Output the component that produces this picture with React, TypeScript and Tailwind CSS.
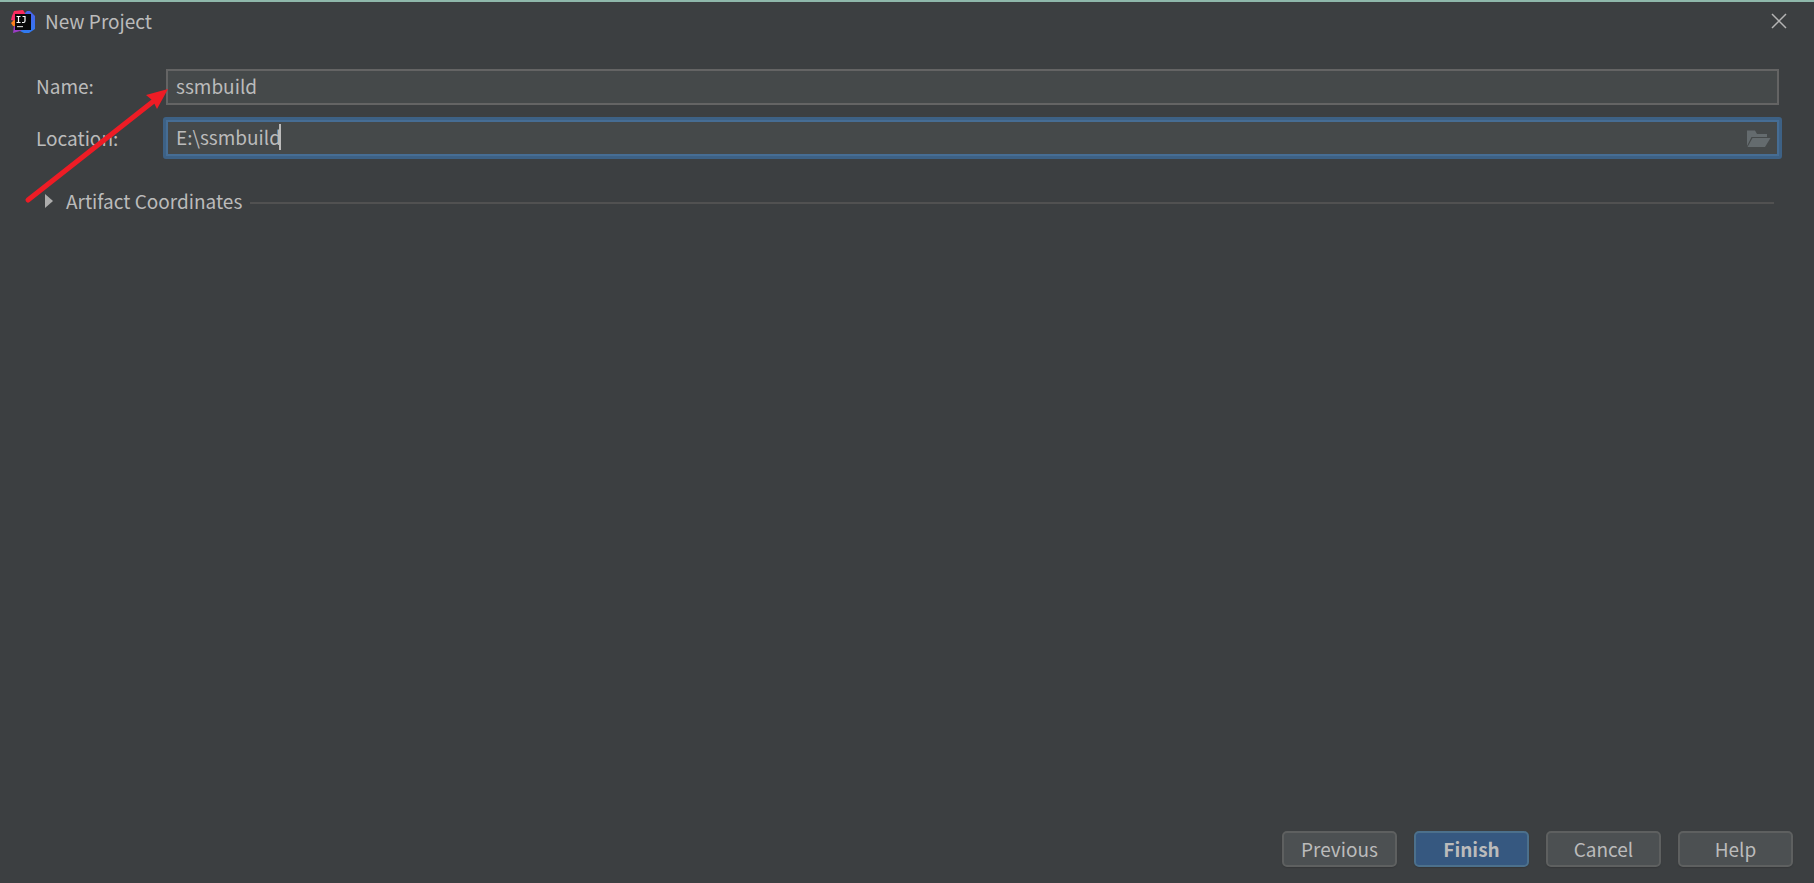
import { useState } from "react";

const FIELD = "block h-9 w-full border-2 bg-[#45494a] px-2 text-[#bbbbbb] outline-none";
const BUTTON = "h-9 w-[115px] rounded-[5px] border-2 shadow-[0_1px_1px_#353739]";

function IdeaLogo() {
  return (
    <svg width="24" height="24" viewBox="0 0 24 24" className="shrink-0" aria-hidden="true">
      <defs>
        <linearGradient id="logo-blue" x1="0.6" y1="0" x2="0.5" y2="1">
          <stop offset="0" stopColor="#4a62ea" />
          <stop offset="1" stopColor="#2f7bf0" />
        </linearGradient>
        <linearGradient id="logo-pink" x1="0.7" y1="0" x2="0.2" y2="1">
          <stop offset="0" stopColor="#fe2857" />
          <stop offset="1" stopColor="#f5316f" />
        </linearGradient>
      </defs>
      <path d="M12 5 L16 1 L19 1 L24 6 L24 19 L18 23 L13 23 L9 21 Z" fill="url(#logo-blue)" />
      <path d="M3 1 L12 0 L15 5 L8 12 L0 10 L1 6 Z" fill="url(#logo-pink)" />
      <path d="M0 13 L3 10 L6 11 L6 17 L2 16 Z" fill="#fc801d" />
      <path d="M2 23 L3 16 L13 19 L9 21 Z" fill="#9a3cc4" />
      <rect x="4" y="4" width="16" height="16" fill="#080808" />
      <path d="M5.5 6.5 H9.5 M7.5 6.5 V12.5 M5.5 12.5 H9.5 M11.5 6.5 H14 V11 Q14 12.5 12.5 12.5 H11" fill="none" stroke="#ffffff" strokeWidth="1.2" />
      <rect x="6" y="16" width="6" height="1.2" fill="#c8c8c8" />
    </svg>
  );
}

function FolderIcon() {
  return (
    <svg width="24" height="18" viewBox="0 0 24 18" fill="#646b6e" aria-hidden="true">
      <path d="M0 0.5 H8 L10 4 H20 V7 H4.5 L0 16 Z" />
      <path d="M5.5 8 H23.5 L18 17 H0.5 Z" />
    </svg>
  );
}

function PointerArrow() {
  return (
    <svg width="180" height="220" viewBox="0 0 180 220" className="pointer-events-none absolute left-0 top-0" aria-hidden="true">
      <path d="M28 198 L155 98" stroke="#ee1c25" strokeWidth="5" strokeLinecap="round" />
      <path d="M168 87 L146 93 L152 98 L153 99 L157 107 Z" fill="#ee1c25" />
    </svg>
  );
}

export default function App() {
  const [name, setName] = useState("ssmbuild");
  const [location, setLocation] = useState("E:\\ssmbuild");

  return (
    <div className="relative flex min-h-screen flex-col border-t-2 border-[#8fb8ab] bg-[#3c3f41] font-['Noto_Sans_CJK_SC','Noto_Sans',sans-serif] text-[19px] leading-6 text-[#bbbbbb]">
      <header className="flex h-10 items-center pl-[11px] pr-[27px]">
        <IdeaLogo />
        <h1 className="ml-[10px] flex-1 pb-0.5">New Project</h1>
        <button type="button" aria-label="Close" className="pb-0.5">
          <svg width="16" height="16" viewBox="0 0 16 16" stroke="#b4b4b4" strokeWidth="1.5" aria-hidden="true">
            <path d="M1 1 L15 15 M15 1 L1 15" />
          </svg>
        </button>
      </header>

      <main className="flex-1 pt-[27px]">
        <div className="flex items-center pl-9 pr-[35px]">
          <label htmlFor="name" className="w-[130px] pb-0.5">Name:</label>
          <div className="flex-1">
            <input
              id="name"
              type="text"
              value={name}
              onChange={(e) => setName(e.target.value)}
              className={`${FIELD} border-[#646464] pb-1`}
            />
          </div>
        </div>

        <div className="mt-3 flex items-center pl-9 pr-8">
          <label htmlFor="location" className="w-[127px]">Location:</label>
          <div className="relative flex-1 rounded-[3px] border-[3px] border-[#3d6185]">
            <input
              id="location"
              type="text"
              value={location}
              onChange={(e) => setLocation(e.target.value)}
              className={`${FIELD} border-[#466d94] pb-1 pr-10`}
            />
            <span className="absolute left-[113px] top-1 h-[26px] w-[2px] bg-[#bbbbbb]" />
            <button type="button" aria-label="Browse" className="absolute right-2 top-[10px]">
              <FolderIcon />
            </button>
          </div>
        </div>

        <div className="mt-[30px] flex items-center pl-[45px] pr-10">
          <button type="button" aria-expanded="false" className="flex items-center">
            <svg width="8" height="14" viewBox="0 0 8 14" fill="#adadad" aria-hidden="true">
              <path d="M0 0 L8 7 L0 14 Z" />
            </svg>
            <span className="ml-[13px]">Artifact Coordinates</span>
          </button>
          <div className="ml-2 mt-1 h-[2px] flex-1 bg-[#515151]" />
        </div>
      </main>

      <footer className="flex justify-end gap-[17px] pb-4 pr-[21px]">
        <button type="button" className={`${BUTTON} border-[#5e6060] bg-[#4c5052]`}>Previous</button>
        <button type="button" className={`${BUTTON} border-[#4c708c] bg-[#365880] font-bold`}>Finish</button>
        <button type="button" className={`${BUTTON} border-[#5e6060] bg-[#4c5052]`}>Cancel</button>
        <button type="button" className={`${BUTTON} border-[#5e6060] bg-[#4c5052]`}>Help</button>
      </footer>

      <PointerArrow />
    </div>
  );
}
